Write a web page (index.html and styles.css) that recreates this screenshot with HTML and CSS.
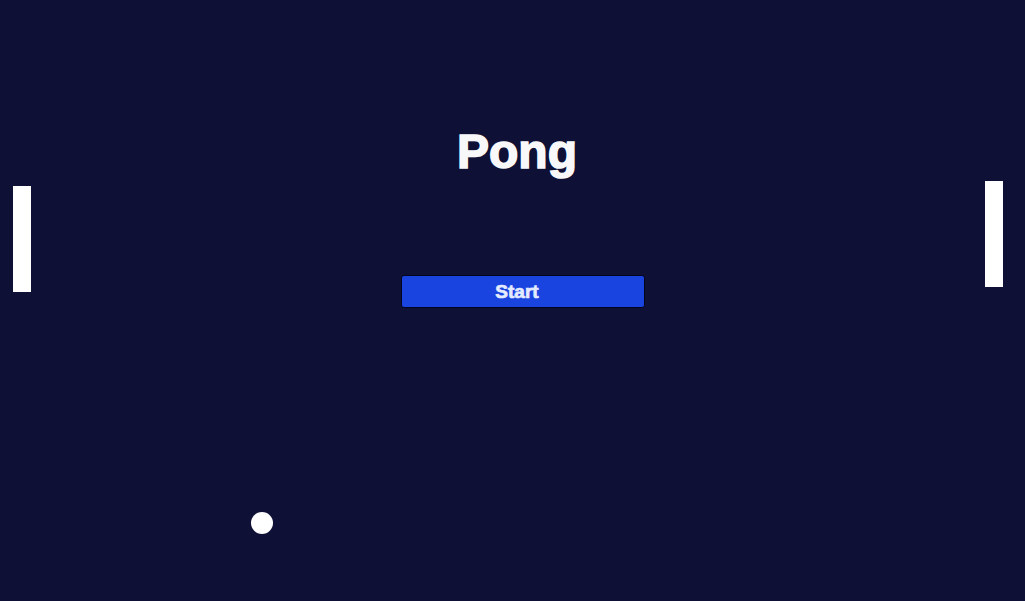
FILE: index.html
```html
<!DOCTYPE html>
<html>
<head>
<meta charset="utf-8">
<link rel="stylesheet" href="styles.css">
</head>
<body>
<div class="stage">
  <div class="menu">
    <h1 class="title">Pong</h1>
    <button class="start">Start</button>
  </div>
  <div class="paddle paddle-left"></div>
  <div class="paddle paddle-right"></div>
  <div class="ball"></div>
</div>
</body>
</html>
```
FILE: styles.css
```css
html, body {
  margin: 0;
  padding: 0;
  background: #0e1035;
}
.stage {
  position: relative;
  width: 1025px;
  height: 601px;
  overflow: hidden;
  background: #0e1035;
  font-family: "Liberation Sans", Arial, sans-serif;
}
.menu {
  display: flex;
  flex-direction: column;
  align-items: center;
  padding-top: 124px;
}
.title {
  margin: 0 0 96px 9px;
  font-size: 48px;
  font-weight: bold;
  color: #f8f8fa;
  -webkit-text-stroke: 1.6px #f8f8fa;
  line-height: normal;
}
.start {
  margin-left: 21px;
  width: 244px;
  height: 33px;
  box-sizing: border-box;
  background: #1a44e0;
  border: 1px solid #03051c;
  border-radius: 3px;
  color: #e4ebff;
  -webkit-text-stroke: 0.7px #e4ebff;
  font-family: "Liberation Sans", Arial, sans-serif;
  font-size: 19px;
  font-weight: bold;
  padding: 0 12px 0 0;
  cursor: pointer;
}
.paddle {
  position: absolute;
  width: 18px;
  height: 106px;
  background: #ffffff;
}
.paddle-left {
  left: 13px;
  top: 186px;
}
.paddle-right {
  left: 985px;
  top: 181px;
}
.ball {
  position: absolute;
  left: 251px;
  top: 512px;
  width: 22px;
  height: 22px;
  border-radius: 50%;
  background: #ffffff;
}
```
